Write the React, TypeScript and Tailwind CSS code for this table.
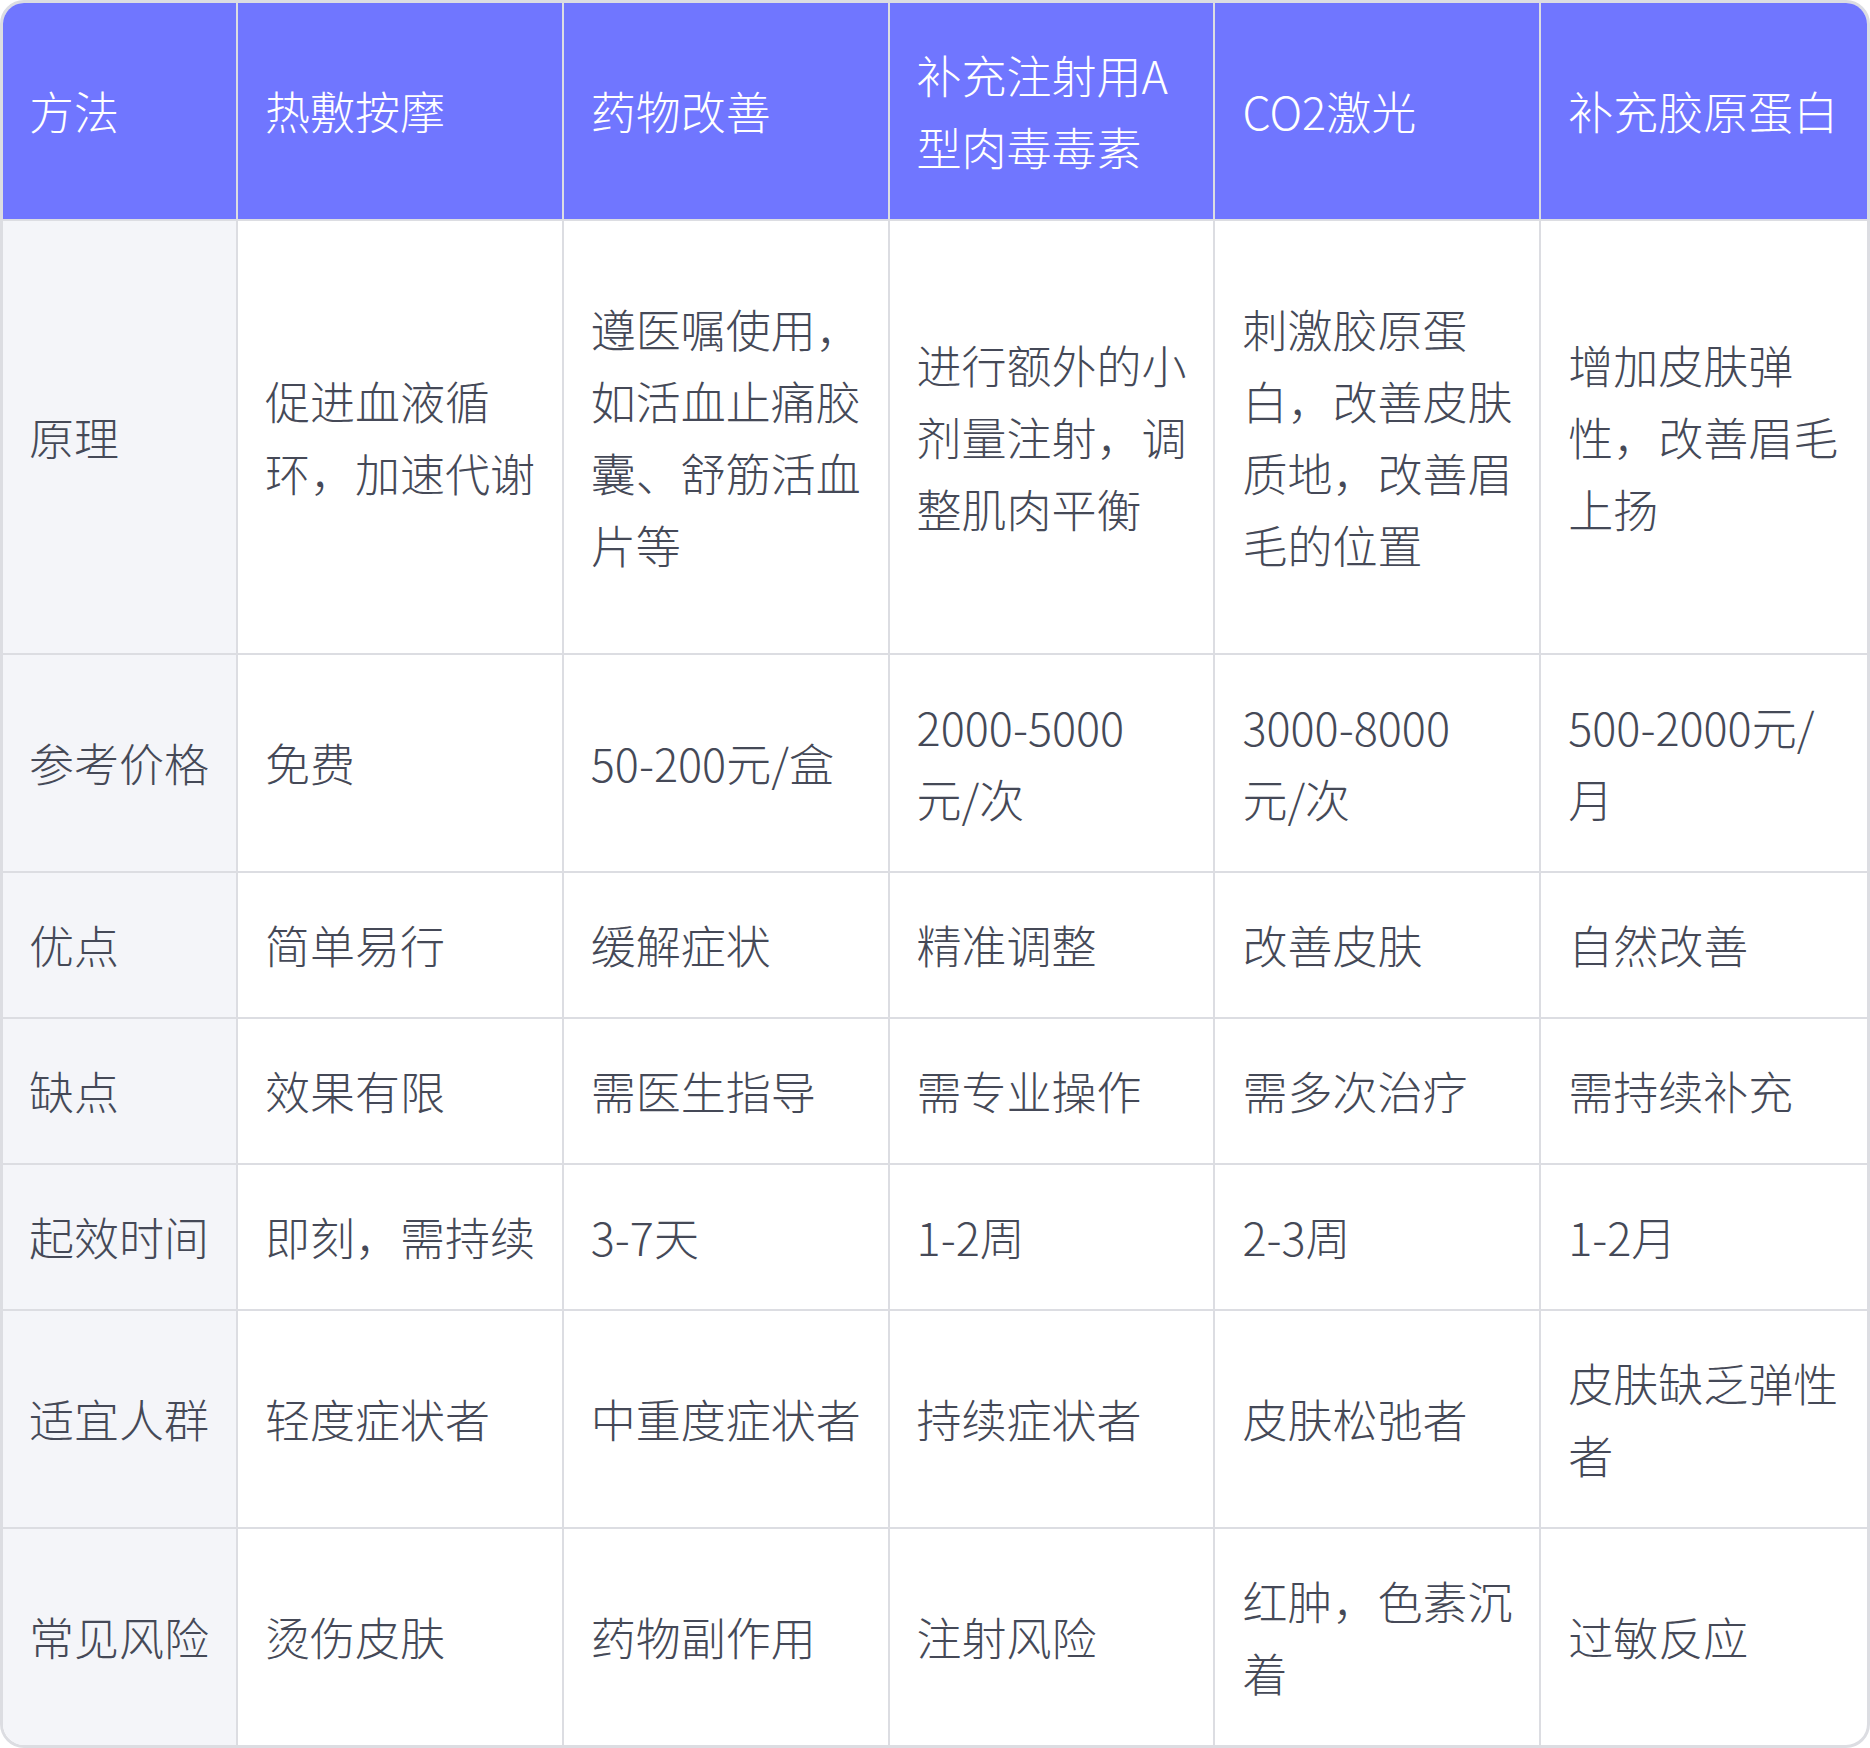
import type { ReactNode } from "react";

const header = ["方法", "热敷按摩", "药物改善", "补充注射用A型肉毒毒素", "CO2激光", "补充胶原蛋白"];

const rows: { label: string; cells: ReactNode[] }[] = [
  {
    label: "原理",
    cells: [
      "促进血液循环，加速代谢",
      "遵医嘱使用，如活血止痛胶囊、舒筋活血片等",
      "进行额外的小剂量注射，调整肌肉平衡",
      "刺激胶原蛋白，改善皮肤质地，改善眉毛的位置",
      "增加皮肤弹性，改善眉毛上扬",
    ],
  },
  {
    label: "参考价格",
    cells: [
      "免费",
      "50-200元/盒",
      <>
        2000-5000<span className="whitespace-nowrap">元/次</span>
      </>,
      <>
        3000-8000<span className="whitespace-nowrap">元/次</span>
      </>,
      "500-2000元/月",
    ],
  },
  { label: "优点", cells: ["简单易行", "缓解症状", "精准调整", "改善皮肤", "自然改善"] },
  { label: "缺点", cells: ["效果有限", "需医生指导", "需专业操作", "需多次治疗", "需持续补充"] },
  { label: "起效时间", cells: ["即刻，需持续", "3-7天", "1-2周", "2-3周", "1-2月"] },
  { label: "适宜人群", cells: ["轻度症状者", "中重度症状者", "持续症状者", "皮肤松弛者", "皮肤缺乏弹性者"] },
  { label: "常见风险", cells: ["烫伤皮肤", "药物副作用", "注射风险", "红肿，色素沉着", "过敏反应"] },
];

const App = () => {
  return (
    <div className="w-[1870px] font-['Noto_Sans_CJK_SC_Light','Noto_Sans_CJK_SC','Noto_Sans',sans-serif] font-light text-[45px] leading-[72px]">
      <div className="border-[3px] border-[#dcdde2] rounded-3xl overflow-hidden bg-white">
        <div className="grid grid-cols-[235px_repeat(5,minmax(0,1fr))]">
          {header.map((h, i) => (
            <div
              key={h}
              className={
                i === 0
                  ? "flex items-center bg-[#7076ff] text-white pl-[26px] pr-[16px] py-[36px] border-b-2 border-r-2 border-[#dcdde2]"
                  : i === header.length - 1
                    ? "flex items-center bg-[#7076ff] text-white pl-[27px] pr-[20px] py-[36px] border-b-2 border-[#dcdde2]"
                    : "flex items-center bg-[#7076ff] text-white pl-[27px] pr-[20px] py-[36px] border-b-2 border-r-2 border-[#dcdde2]"
              }
            >
              <span>{h}</span>
            </div>
          ))}

          {rows.map((row, ri) => {
            const last = ri === rows.length - 1;
            const tall = ri === 0;
            return [
              <div
                key={row.label}
                className={
                  last
                    ? "flex items-center bg-[#f4f5f9] text-[#454957] pl-[26px] pr-[16px] py-[36px] border-r-2 border-[#dcdde2]"
                    : tall
                      ? "flex items-center min-h-[434px] bg-[#f4f5f9] text-[#454957] pl-[26px] pr-[16px] py-[36px] border-r-2 border-b-2 border-[#dcdde2]"
                      : "flex items-center bg-[#f4f5f9] text-[#454957] pl-[26px] pr-[16px] py-[36px] border-r-2 border-b-2 border-[#dcdde2]"
                }
              >
                <span>{row.label}</span>
              </div>,
              ...row.cells.map((c, ci) => {
                const lastCol = ci === row.cells.length - 1;
                let cls = "flex items-center text-[#454957] pl-[27px] pr-[20px] py-[36px] border-[#dcdde2]";
                if (!lastCol) cls += " border-r-2";
                if (!last) cls += " border-b-2";
                if (tall) cls += " min-h-[434px]";
                return (
                  <div key={row.label + ci} className={cls}>
                    <span>{c}</span>
                  </div>
                );
              }),
            ];
          })}
        </div>
      </div>
    </div>
  );
};

export default App;
